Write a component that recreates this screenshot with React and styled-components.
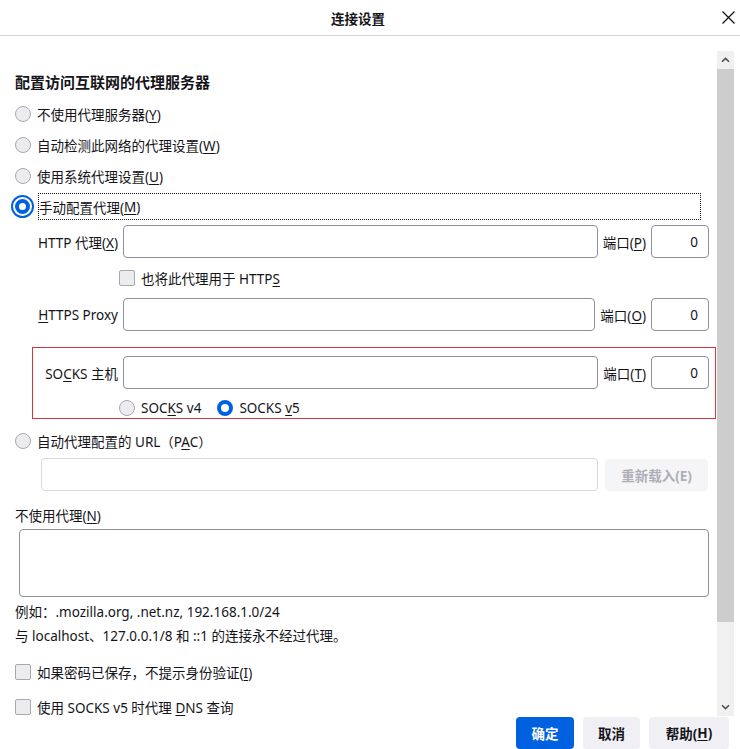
import React from 'react';
import styled, { createGlobalStyle } from 'styled-components';

const GlobalStyle = createGlobalStyle`
  html, body {
    margin: 0;
    padding: 0;
    background: #ffffff;
  }
  body {
    font-family: "Noto Sans", "Noto Sans CJK SC", sans-serif;
    font-size: 13.5px;
    color: #15141a;
  }
  u {
    text-underline-offset: 2px;
  }
`;

const Dialog = styled.div`
  width: 740px;
  height: 749px;
  overflow: hidden;
  display: flex;
  flex-direction: column;
  background: #fff;
`;

const Header = styled.div`
  height: 35px;
  flex: none;
  display: flex;
  align-items: center;
  border-bottom: 1px solid #d7d7db;
`;

const Title = styled.div`
  flex: 1;
  text-align: center;
  font-weight: 700;
  font-size: 13.5px;
`;

const CloseButton = styled.div`
  width: 24px;
  height: 24px;
  display: flex;
  align-items: center;
  justify-content: center;
`;

const Main = styled.div`
  height: 681px;
  flex: none;
  display: flex;
`;

const Content = styled.div`
  width: 717px;
  box-sizing: border-box;
  padding: 0 8px 0 15px;
  display: flex;
  flex-direction: column;
  overflow: hidden;
  & > * {
    flex-shrink: 0;
  }
`;

const Heading = styled.div`
  margin-top: 36px;
  height: 20px;
  line-height: 20px;
  font-size: 15px;
  font-weight: 700;
`;

const Option = styled.div`
  height: ${({ h }) => h || 31}px;
  margin-top: ${({ mt }) => mt || 0}px;
  margin-left: ${({ ml }) => ml || 0}px;
  display: flex;
  align-items: center;
  gap: 6px;
  white-space: nowrap;
`;

const Radio = styled.span`
  width: 16px;
  height: 16px;
  box-sizing: border-box;
  border-radius: 50%;
  flex: none;
  margin-left: ${({ spaced }) => (spaced ? 10 : 0)}px;
  border: ${({ checked }) => (checked ? '4px solid #0061e0' : '1px solid #a8a8b0')};
  background: ${({ checked }) => (checked ? '#fff' : '#ececef')};
`;

const FocusRadio = styled.span`
  width: 23px;
  height: 23px;
  box-sizing: border-box;
  border-radius: 50%;
  border: 2px solid #0061e0;
  margin-left: -4px;
  margin-right: -2px;
  flex: none;
  display: flex;
  align-items: center;
  justify-content: center;
  &::after {
    content: '';
    width: 15px;
    height: 15px;
    box-sizing: border-box;
    border-radius: 50%;
    border: 4px solid #0061e0;
    background: #fff;
  }
`;

const FocusLabel = styled.span`
  flex: 1;
  height: 27px;
  box-sizing: border-box;
  border: 1px dotted #15141a;
  display: flex;
  align-items: center;
  margin-right: 8px;
`;

const Checkbox = styled.span`
  width: 16px;
  height: 16px;
  box-sizing: border-box;
  border: 1px solid #a8a8b0;
  border-radius: 2px;
  background: #ececef;
  flex: none;
`;

const Indent = styled.div`
  margin-left: 17px;
  display: flex;
  flex-direction: column;
  & > * {
    flex-shrink: 0;
  }
`;

const FieldRow = styled.div`
  display: flex;
  align-items: center;
  margin-top: ${({ mt }) => mt || 0}px;
  white-space: nowrap;
`;

const FieldLabel = styled.div`
  width: ${({ w }) => w || 91}px;
  flex: none;
  text-align: right;
  padding-right: 5px;
  box-sizing: border-box;
`;

const TextInput = styled.div`
  flex: 1;
  height: 33px;
  box-sizing: border-box;
  border: 1px solid ${({ disabled }) => (disabled ? '#d9d9de' : '#8f8f9d')};
  border-radius: 4px;
  background: #fff;
`;

const PortLabel = styled.div`
  flex: none;
  padding: 0 5px;
`;

const PortInput = styled.div`
  width: 58px;
  height: 33px;
  flex: none;
  box-sizing: border-box;
  border: 1px solid #8f8f9d;
  border-radius: 4px;
  display: flex;
  align-items: center;
  justify-content: flex-end;
  padding-right: 10px;
`;

const SocksBox = styled.div`
  margin-top: 16px;
  margin-right: -7px;
  padding: 8px 6px 0 0;
  border: 1px solid #d9343a;
  display: flex;
  flex-direction: column;
`;

const SocksVersions = styled.div`
  margin: 11px 0 2px 86px;
  height: 16px;
  display: flex;
  align-items: center;
  gap: 6px;
`;

const PacRow = styled.div`
  margin: 2px 0 0 26px;
  display: flex;
  align-items: center;
  gap: 7px;
`;

const ReloadButton = styled.div`
  width: 103px;
  height: 32px;
  flex: none;
  border-radius: 4px;
  background: #f5f5f7;
  color: #aeaeb6;
  font-weight: 700;
  display: flex;
  align-items: center;
  justify-content: center;
  margin-right: 1px;
`;

const Label = styled.div`
  margin-top: ${({ mt }) => mt || 0}px;
  height: ${({ h }) => h || 20}px;
  line-height: ${({ h }) => h || 20}px;
  white-space: nowrap;
`;

const TextArea = styled.div`
  margin: 3px 0 0 4px;
  height: 68px;
  box-sizing: border-box;
  border: 1px solid #8f8f9d;
  border-radius: 4px;
`;

const Scrollbar = styled.div`
  width: 17px;
  margin-top: 15px;
  margin-bottom: 1px;
  background: #f0f0f0;
  display: flex;
  flex-direction: column;
`;

const ScrollArrow = styled.div`
  height: 18px;
  display: flex;
  align-items: center;
  justify-content: center;
`;

const Thumb = styled.div`
  height: 553px;
  background: #cdcdcd;
`;

const Track = styled.div`
  flex: 1;
`;

const Footer = styled.div`
  display: flex;
  justify-content: flex-end;
  gap: 9px;
  padding-right: 11px;
`;

const Button = styled.div`
  width: ${({ w }) => w}px;
  height: 32px;
  border-radius: 4px;
  font-weight: 700;
  display: flex;
  align-items: center;
  justify-content: center;
  background: ${({ primary }) => (primary ? '#0061e0' : '#f0f0f4')};
  color: ${({ primary }) => (primary ? '#fbfbfe' : '#15141a')};
`;

const Chevron = ({ down }) => (
  <svg width="9" height="6" viewBox="0 0 9 6">
    <path
      d={down ? 'M1 1.2 L4.5 4.6 L8 1.2' : 'M1 4.8 L4.5 1.4 L8 4.8'}
      fill="none"
      stroke="#505050"
      strokeWidth="1.6"
    />
  </svg>
);

export default function App() {
  return (
    <Dialog>
      <GlobalStyle />
      <Header>
        <Title>连接设置</Title>
        <CloseButton>
          <svg width="13" height="13" viewBox="0 0 13 13">
            <path d="M0.5 0.5 L12.5 12.5 M12.5 0.5 L0.5 12.5" stroke="#15141a" strokeWidth="1.3" />
          </svg>
        </CloseButton>
      </Header>
      <Main>
        <Content>
          <Heading>配置访问互联网的代理服务器</Heading>
          <Option mt={6}>
            <Radio />
            <span>不使用代理服务器(<u>Y</u>)</span>
          </Option>
          <Option>
            <Radio />
            <span>自动检测此网络的代理设置(<u>W</u>)</span>
          </Option>
          <Option>
            <Radio />
            <span>使用系统代理设置(<u>U</u>)</span>
          </Option>
          <Option>
            <FocusRadio />
            <FocusLabel>手动配置代理(<u>M</u>)</FocusLabel>
          </Option>

          <Indent>
            <FieldRow mt={3}>
              <FieldLabel>HTTP 代理(<u>X</u>)</FieldLabel>
              <TextInput />
              <PortLabel>端口(<u>P</u>)</PortLabel>
              <PortInput>0</PortInput>
            </FieldRow>
            <Option h={40} ml={87}>
              <Checkbox />
              <span>也将此代理用于 HTTP<u>S</u></span>
            </Option>
            <FieldRow>
              <FieldLabel>
                <u>H</u>TTPS Proxy
              </FieldLabel>
              <TextInput />
              <PortLabel>端口(<u>O</u>)</PortLabel>
              <PortInput>0</PortInput>
            </FieldRow>
            <SocksBox>
              <FieldRow>
                <FieldLabel w={90}>
                  SO<u>C</u>KS 主机
                </FieldLabel>
                <TextInput />
                <PortLabel>端口(<u>T</u>)</PortLabel>
                <PortInput>0</PortInput>
              </FieldRow>
              <SocksVersions>
                <Radio />
                <span>
                  SOC<u>K</u>S v4
                </span>
                <Radio checked spaced />
                <span>
                  SOCKS <u>v</u>5
                </span>
              </SocksVersions>
            </SocksBox>
          </Indent>

          <Option mt={6}>
            <Radio />
            <span>
              自动代理配置的 URL（P<u>A</u>C）
            </span>
          </Option>
          <PacRow>
            <TextInput disabled />
            <ReloadButton>重新载入(E)</ReloadButton>
          </PacRow>

          <Label mt={15}>
            不使用代理(<u>N</u>)
          </Label>
          <TextArea />
          <Label mt={3} h={24}>
            例如：.mozilla.org, .net.nz, 192.168.1.0/24
          </Label>
          <Label h={24}>与 localhost、127.0.0.1/8 和 ::1 的连接永不经过代理。</Label>

          <Option mt={6} h={35}>
            <Checkbox />
            <span>
              如果密码已保存，不提示身份验证(<u>I</u>)
            </span>
          </Option>
          <Option h={35}>
            <Checkbox />
            <span>
              使用 SOCKS v5 时代理 <u>D</u>NS 查询
            </span>
          </Option>
        </Content>
        <Scrollbar>
          <ScrollArrow>
            <Chevron />
          </ScrollArrow>
          <Thumb />
          <Track />
          <ScrollArrow>
            <Chevron down />
          </ScrollArrow>
        </Scrollbar>
      </Main>
      <Footer>
        <Button primary w={58}>确定</Button>
        <Button w={57}>取消</Button>
        <Button w={80}>
          帮助(<u>H</u>)
        </Button>
      </Footer>
    </Dialog>
  );
}
